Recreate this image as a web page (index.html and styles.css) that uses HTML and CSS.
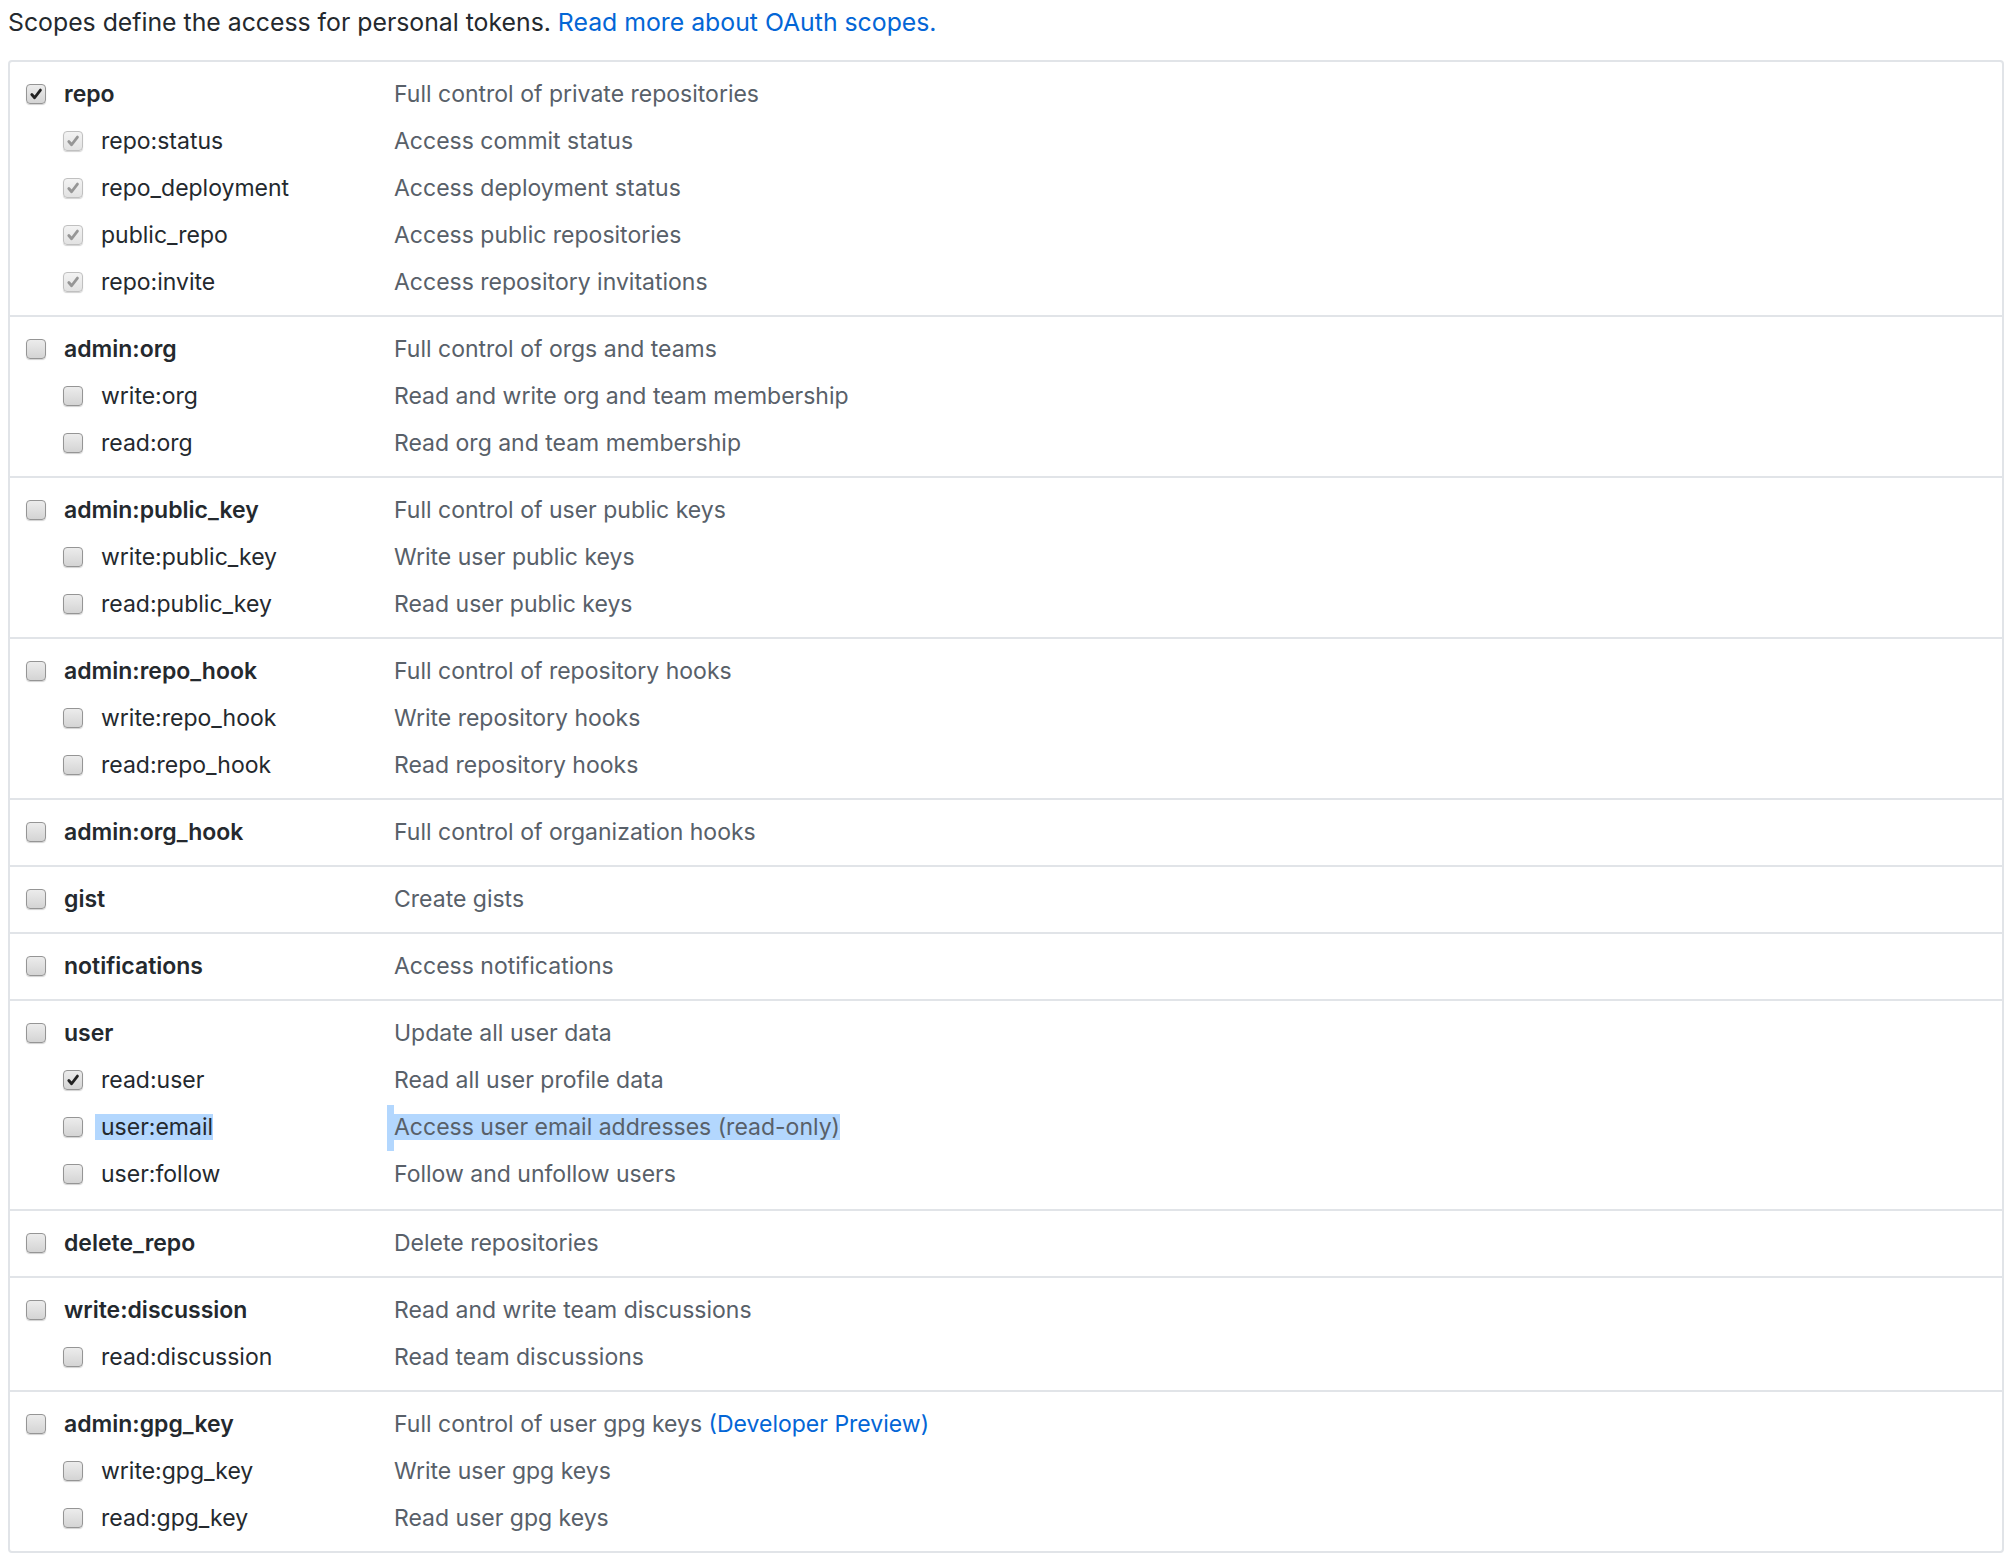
FILE: index.html
```html
<!DOCTYPE html>
<html lang="en">
<head>
    <meta charset="UTF-8" />
    <title>Personal access token scopes</title>
    <link rel="stylesheet" href="styles.css">
</head>
<body>
    <p class="note">Scopes define the access for personal tokens. <a href="#" class="link">Read more about OAuth scopes.</a></p>

    <div class="scopes">
        <div class="group">
            <div class="row"><label class="name"><span class="cb checked"><svg viewBox="0 0 12 12"><path d="M2.4 6.4 L4.8 9.2 L9.8 2.6"/></svg></span><b>repo</b></label><span class="desc">Full control of private repositories</span></div>
            <div class="row child"><label class="name"><span class="cb checked disabled"><svg viewBox="0 0 12 12"><path d="M2.4 6.4 L4.8 9.2 L9.8 2.6"/></svg></span>repo:status</label><span class="desc">Access commit status</span></div>
            <div class="row child"><label class="name"><span class="cb checked disabled"><svg viewBox="0 0 12 12"><path d="M2.4 6.4 L4.8 9.2 L9.8 2.6"/></svg></span>repo_deployment</label><span class="desc">Access deployment status</span></div>
            <div class="row child"><label class="name"><span class="cb checked disabled"><svg viewBox="0 0 12 12"><path d="M2.4 6.4 L4.8 9.2 L9.8 2.6"/></svg></span>public_repo</label><span class="desc">Access public repositories</span></div>
            <div class="row child"><label class="name"><span class="cb checked disabled"><svg viewBox="0 0 12 12"><path d="M2.4 6.4 L4.8 9.2 L9.8 2.6"/></svg></span>repo:invite</label><span class="desc">Access repository invitations</span></div>
        </div>

        <div class="group">
            <div class="row"><label class="name"><span class="cb"></span><b>admin:org</b></label><span class="desc">Full control of orgs and teams</span></div>
            <div class="row child"><label class="name"><span class="cb"></span>write:org</label><span class="desc">Read and write org and team membership</span></div>
            <div class="row child"><label class="name"><span class="cb"></span>read:org</label><span class="desc">Read org and team membership</span></div>
        </div>

        <div class="group">
            <div class="row"><label class="name"><span class="cb"></span><b>admin:public_key</b></label><span class="desc">Full control of user public keys</span></div>
            <div class="row child"><label class="name"><span class="cb"></span>write:public_key</label><span class="desc">Write user public keys</span></div>
            <div class="row child"><label class="name"><span class="cb"></span>read:public_key</label><span class="desc">Read user public keys</span></div>
        </div>

        <div class="group">
            <div class="row"><label class="name"><span class="cb"></span><b>admin:repo_hook</b></label><span class="desc">Full control of repository hooks</span></div>
            <div class="row child"><label class="name"><span class="cb"></span>write:repo_hook</label><span class="desc">Write repository hooks</span></div>
            <div class="row child"><label class="name"><span class="cb"></span>read:repo_hook</label><span class="desc">Read repository hooks</span></div>
        </div>

        <div class="group">
            <div class="row"><label class="name"><span class="cb"></span><b>admin:org_hook</b></label><span class="desc">Full control of organization hooks</span></div>
        </div>

        <div class="group">
            <div class="row"><label class="name"><span class="cb"></span><b>gist</b></label><span class="desc">Create gists</span></div>
        </div>

        <div class="group">
            <div class="row"><label class="name"><span class="cb"></span><b>notifications</b></label><span class="desc">Access notifications</span></div>
        </div>

        <div class="group tall">
            <div class="row"><label class="name"><span class="cb"></span><b>user</b></label><span class="desc">Update all user data</span></div>
            <div class="row child"><label class="name"><span class="cb checked"><svg viewBox="0 0 12 12"><path d="M2.4 6.4 L4.8 9.2 L9.8 2.6"/></svg></span>read:user</label><span class="desc">Read all user profile data</span></div>
            <div class="row child"><label class="name"><span class="cb"></span><span class="sel">user:email</span></label><span class="desc"><span class="sel sel-start">Access user email addresses (read-only)</span></span></div>
            <div class="row child"><label class="name"><span class="cb"></span>user:follow</label><span class="desc">Follow and unfollow users</span></div>
        </div>

        <div class="group">
            <div class="row"><label class="name"><span class="cb"></span><b>delete_repo</b></label><span class="desc">Delete repositories</span></div>
        </div>

        <div class="group">
            <div class="row"><label class="name"><span class="cb"></span><b>write:discussion</b></label><span class="desc">Read and write team discussions</span></div>
            <div class="row child"><label class="name"><span class="cb"></span>read:discussion</label><span class="desc">Read team discussions</span></div>
        </div>

        <div class="group">
            <div class="row"><label class="name"><span class="cb"></span><b>admin:gpg_key</b></label><span class="desc">Full control of user gpg keys <a href="#" class="link">(Developer Preview)</a></span></div>
            <div class="row child"><label class="name"><span class="cb"></span>write:gpg_key</label><span class="desc">Write user gpg keys</span></div>
            <div class="row child"><label class="name"><span class="cb"></span>read:gpg_key</label><span class="desc">Read user gpg keys</span></div>
        </div>
    </div>
</body>
</html>
```

FILE: styles.css
```css
body {
    margin: 8px;
    background: #fff;
    color: #24292e;
    font-family: Inter, "Liberation Sans", sans-serif;
    font-size: 23px;
}
.note {
    margin: 0 0 24px;
    font-size: 24.8px;
    line-height: 28px;
}
.link {
    color: #0366d6;
    text-decoration: none;
}
.scopes {
    border: 2px solid #e1e4e8;
    border-radius: 4px;
}
.group {
    padding: 8px 0 10px;
    border-top: 2px solid #e1e4e8;
}
.group:first-child {
    border-top: none;
}
.group.tall {
    padding-bottom: 12px;
}
.row {
    display: grid;
    grid-template-columns: 384px 1fr;
    align-items: center;
    height: 47px;
}
.name {
    display: flex;
    align-items: center;
    gap: 18px;
    padding-left: 16px;
}
.name b {
    font-weight: 600;
}
.row.child .name {
    padding-left: 53px;
}
.desc {
    color: #586069;
}
.cb {
    flex: none;
    width: 20px;
    height: 20px;
    box-sizing: border-box;
    border: 1px solid #959595;
    border-radius: 4px;
    background: linear-gradient(#ececec, #d4d4d4);
    box-shadow: 0 1px 1px rgba(0,0,0,0.18);
    display: flex;
    align-items: center;
    justify-content: center;
}
.cb svg {
    width: 14px;
    height: 14px;
}
.cb path {
    fill: none;
    stroke: #222;
    stroke-width: 2.4;
    stroke-linecap: round;
    stroke-linejoin: round;
}
.cb.disabled {
    border-color: #c0c0c0;
    background: linear-gradient(#f3f3f3, #e2e2e2);
}
.cb.disabled path {
    stroke: #969696;
}
.sel {
    background: #b3d7fe;
    line-height: 26px;
    display: inline-block;
}
.name .sel {
    margin-left: -6px;
    padding-left: 6px;
}
.sel-start {
    position: relative;
    margin-left: -7px;
    padding-left: 7px;
}
.sel-start::before {
    content: "";
    position: absolute;
    left: 0;
    top: -9px;
    bottom: -11px;
    width: 7px;
    background: #b3d7fe;
}
```
